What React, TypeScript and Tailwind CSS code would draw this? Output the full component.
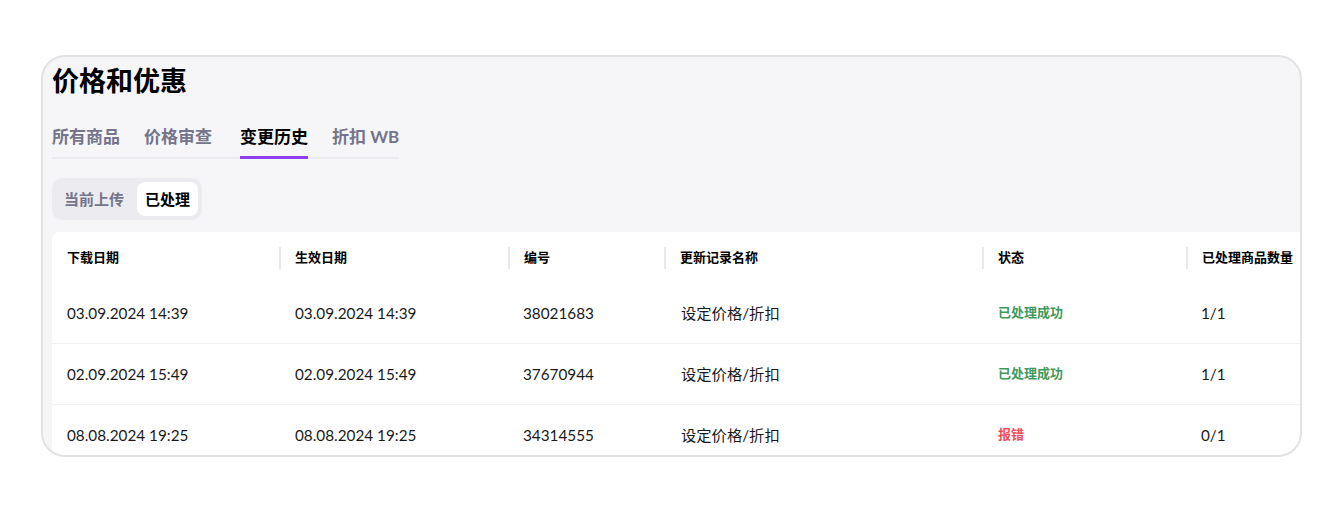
import React from 'react';

const FONT = "font-['Lato','Noto_Sans_CJK_SC',sans-serif]";

const tabs = [
  { label: '所有商品', gap: '' },
  { label: '价格审查', gap: 'ml-6' },
  { label: '变更历史', gap: 'ml-7' },
  { label: '折扣 WB', gap: 'ml-6' },
];

const columns = ['下载日期', '生效日期', '编号', '更新记录名称', '状态', '已处理商品数量'];

type Row = {
  uploaded: string;
  effective: string;
  id: string;
  name: string;
  status: 'ok' | 'error';
  count: string;
};

const rows: Row[] = [
  { uploaded: '03.09.2024 14:39', effective: '03.09.2024 14:39', id: '38021683', name: '设定价格/折扣', status: 'ok', count: '1/1' },
  { uploaded: '02.09.2024 15:49', effective: '02.09.2024 15:49', id: '37670944', name: '设定价格/折扣', status: 'ok', count: '1/1' },
  { uploaded: '08.08.2024 19:25', effective: '08.08.2024 19:25', id: '34314555', name: '设定价格/折扣', status: 'error', count: '0/1' },
];

const GRID = 'grid grid-cols-[227px_229px_156px_318px_204px_1fr]';

export default function App() {
  return (
    <div className={`min-h-screen bg-white pt-[55px] pl-[41px] pr-[41px] ${FONT}`}>
      <div className="h-[402px] w-[1261px] overflow-hidden rounded-[24px] border-2 border-[#e2e2e5] bg-[#f6f6f9] pl-[9px]">
        {/* Заголовок */}
        <h1 className="mt-[8px] text-[27px] font-bold leading-[32px] text-black">价格和优惠</h1>

        {/* Вкладки */}
        <div className="mt-[28px] inline-flex border-b-2 border-[#ebebef]">
          {tabs.map((tab, i) => (
            <div
              key={tab.label}
              className={`${tab.gap} -mb-[2px] border-b-[3px] pb-[7px] text-[17px] font-bold leading-[24px] ${
                i === 2 ? 'border-[#8f3ff0] text-black' : 'border-transparent text-[#74748a]'
              }`}
            >
              {tab.label}
            </div>
          ))}
        </div>

        {/* Переключатель */}
        <div className="mt-[19px]">
          <div className="inline-flex gap-[5px] rounded-[10px] bg-[#ececf0] p-1">
            <div className="flex h-[34px] items-center px-2 text-[15px] font-bold text-[#74748a]">当前上传</div>
            <div className="flex h-[34px] items-center rounded-lg bg-white px-2 text-[15px] font-bold text-black">已处理</div>
          </div>
        </div>

        {/* Таблица */}
        <div className="mt-[12px] rounded-tl-lg bg-white">
          <div className={`${GRID} h-[51px]`}>
            {columns.map((col, i) => (
              <div key={col} className="flex items-center">
                <div
                  className={`flex h-[22px] items-center text-[13px] font-bold text-black ${
                    i === 0 ? 'pl-[15px]' : 'border-l-2 border-[#e9e9ed] pl-[14px]'
                  }`}
                >
                  {col}
                </div>
              </div>
            ))}
          </div>
          {rows.map((row) => (
            <div key={row.id} className={`${GRID} h-[61px] border-b border-[#f0f0f3] text-[15.3px] text-[#1a1a1a]`}>
              <div className="flex items-center pl-[15px]">{row.uploaded}</div>
              <div className="flex items-center pl-4">{row.effective}</div>
              <div className="flex items-center pl-[15px]">{row.id}</div>
              <div className="flex items-center pl-[17px]">{row.name}</div>
              <div className="flex items-center pl-4">
                <span className={`text-[13px] font-bold ${row.status === 'ok' ? 'text-[#3f9a5e]' : 'text-[#ef4f5c]'}`}>
                  {row.status === 'ok' ? '已处理成功' : '报错'}
                </span>
              </div>
              <div className="flex items-center pl-[15px]">{row.count}</div>
            </div>
          ))}
        </div>
      </div>
    </div>
  );
}
